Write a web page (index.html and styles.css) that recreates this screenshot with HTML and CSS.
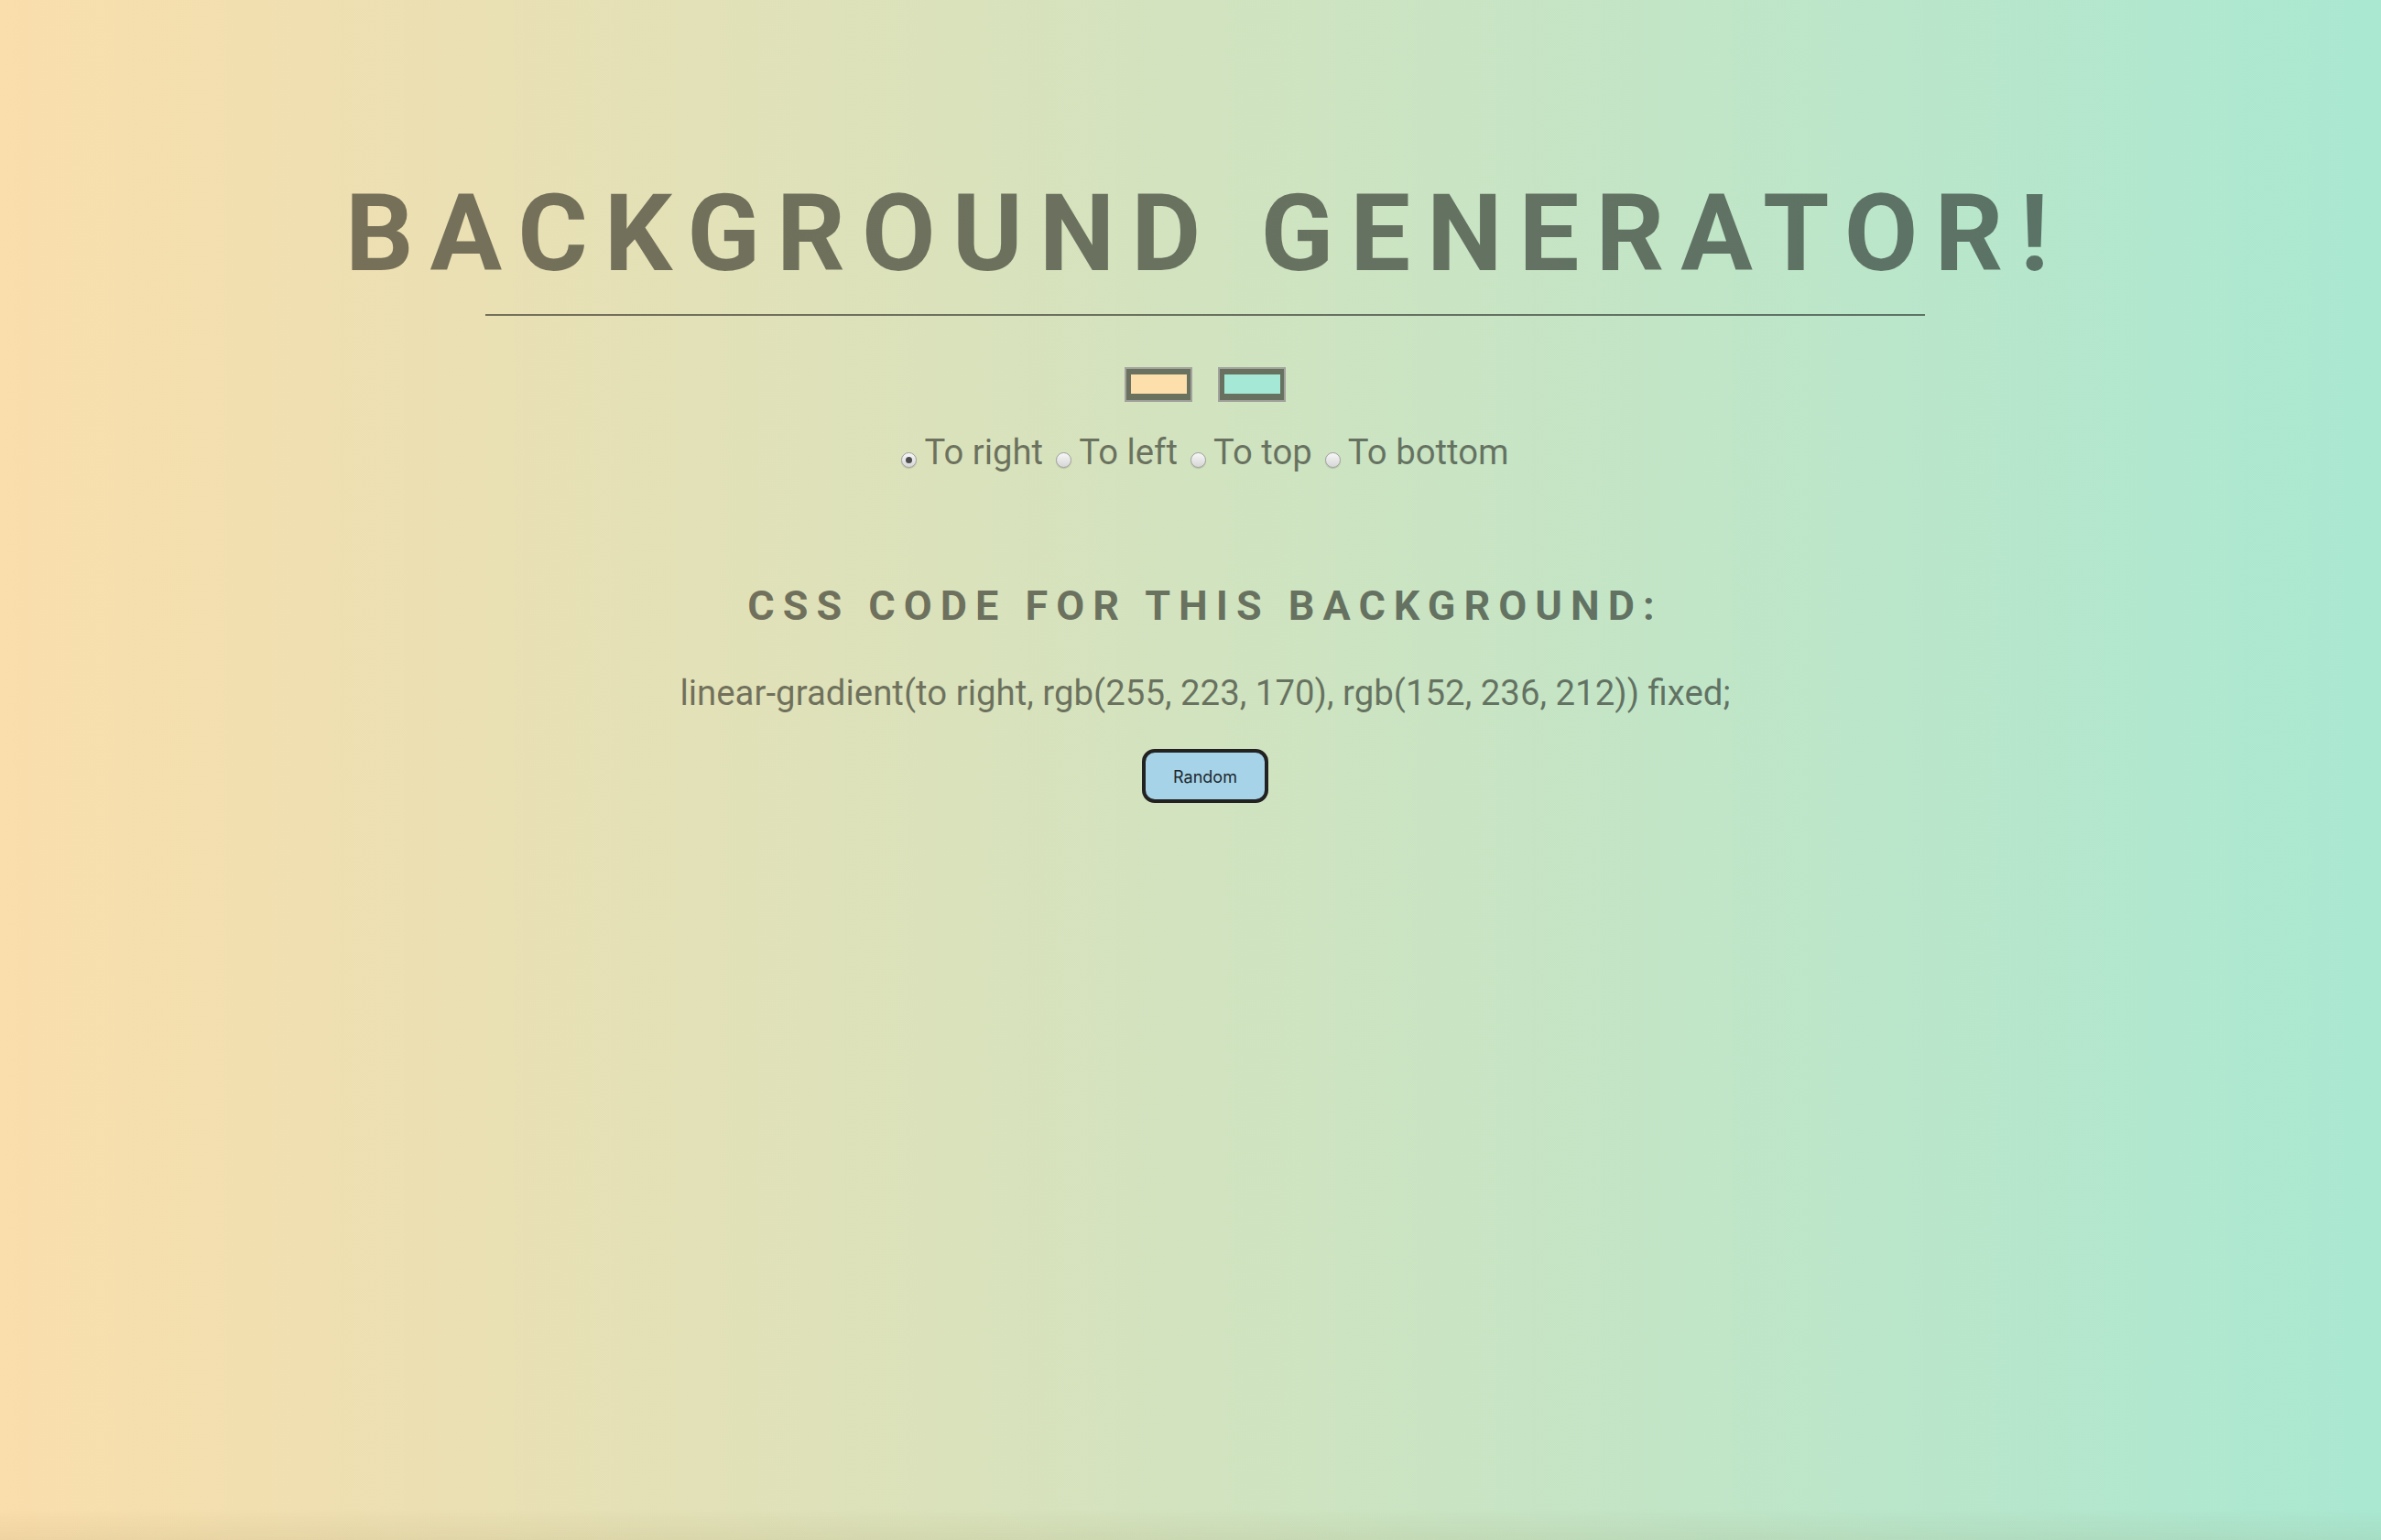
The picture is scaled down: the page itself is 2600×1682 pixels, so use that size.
FILE: index.html
```html
<!DOCTYPE html>
<html lang="en">
<head>
<meta charset="utf-8">
<title>Background Generator</title>
<link rel="stylesheet" href="styles.css">
</head>
<body>
<main class="page">
  <h1 class="title">Background Generator!</h1>
  <div class="rule"></div>
  <div class="swatches">
    <span class="swatch"><span class="swatch-fill swatch-a"></span></span>
    <span class="swatch"><span class="swatch-fill swatch-b"></span></span>
  </div>
  <div class="directions">
    <label class="dir"><input type="radio" name="dir" class="radio" checked><span>To right</span></label>
    <label class="dir"><input type="radio" name="dir" class="radio"><span>To left</span></label>
    <label class="dir"><input type="radio" name="dir" class="radio"><span>To top</span></label>
    <label class="dir"><input type="radio" name="dir" class="radio"><span>To bottom</span></label>
  </div>
  <h3 class="subtitle">CSS code for this background:</h3>
  <p class="code">linear-gradient(to right, rgb(255, 223, 170), rgb(152, 236, 212)) fixed;</p>
  <button class="random" type="button">Random</button>
</main>
</body>
</html>
```

FILE: styles.css
```css
html, body {
  margin: 0;
  padding: 0;
}

body {
  min-height: 100vh;
  background: linear-gradient(to right, rgb(250, 222, 172), rgb(170, 232, 210)) fixed;
  font-family: Roboto, "Liberation Sans", sans-serif;
  color: rgba(0, 0, 0, 0.5);
  text-align: center;
}

body::after {
  content: "";
  position: fixed;
  left: 0;
  right: 0;
  bottom: 0;
  height: 34px;
  background: linear-gradient(to bottom, rgba(120, 100, 40, 0), rgba(120, 100, 40, 0.08));
  pointer-events: none;
}

.page {
  padding-left: 32px;
  display: flex;
  flex-direction: column;
  align-items: center;
}

.title {
  margin: 0;
  padding-top: 197px;
  font-size: 117px;
  line-height: 117px;
  font-weight: 700;
  letter-spacing: 18px;
  text-transform: uppercase;
  white-space: nowrap;
}

.rule {
  width: 1572px;
  height: 2px;
  margin-top: 29px;
  background: rgba(0, 0, 0, 0.5);
}

.swatches {
  margin-top: 56px;
  display: flex;
  gap: 28px;
}

.swatch {
  box-sizing: border-box;
  width: 74px;
  height: 38px;
  border: 2px solid #a2a39d;
  background: rgba(0, 0, 0, 0.5);
  padding: 6px 4px 7px 5px;
  display: flex;
}

.swatch-fill {
  flex: 1;
}

.swatch-a { background: rgb(253, 223, 172); }
.swatch-b { background: rgb(166, 232, 214); }

.directions {
  margin-top: 36px;
  display: flex;
  gap: 14px;
  font-size: 38.3px;
  line-height: 38px;
}

.dir {
  display: flex;
  align-items: center;
  gap: 8px;
}

.radio {
  appearance: none;
  -webkit-appearance: none;
  flex: none;
  box-sizing: border-box;
  width: 17px;
  height: 17px;
  min-width: 17px;
  margin: 16px 0 0 0;
  padding: 0;
  border-radius: 50%;
  border: 1px solid #9fa19c;
  background: linear-gradient(#f7f7f7, #d6d6d6);
  box-shadow: 0 1px 1px rgba(0, 0, 0, 0.15);
  display: grid;
  place-items: center;
}

.radio:checked::before {
  content: "";
  width: 7px;
  height: 7px;
  border-radius: 50%;
  background: #4c4c4c;
}

.subtitle {
  margin: 126px 0 0 0;
  font-size: 45px;
  line-height: 45px;
  font-weight: 700;
  letter-spacing: 9px;
  text-transform: uppercase;
}

.code {
  margin: 54px 0 0 0;
  font-size: 38.4px;
  line-height: 38px;
}

.random {
  margin-top: 42px;
  box-sizing: border-box;
  width: 138px;
  height: 59px;
  border: 4px solid #222;
  border-radius: 14px;
  background: #a6d3e7;
  color: #1b2830;
  font-family: Inter, "Liberation Sans", sans-serif;
  font-size: 18px;
  padding: 2px 0 0 0;
}
```
